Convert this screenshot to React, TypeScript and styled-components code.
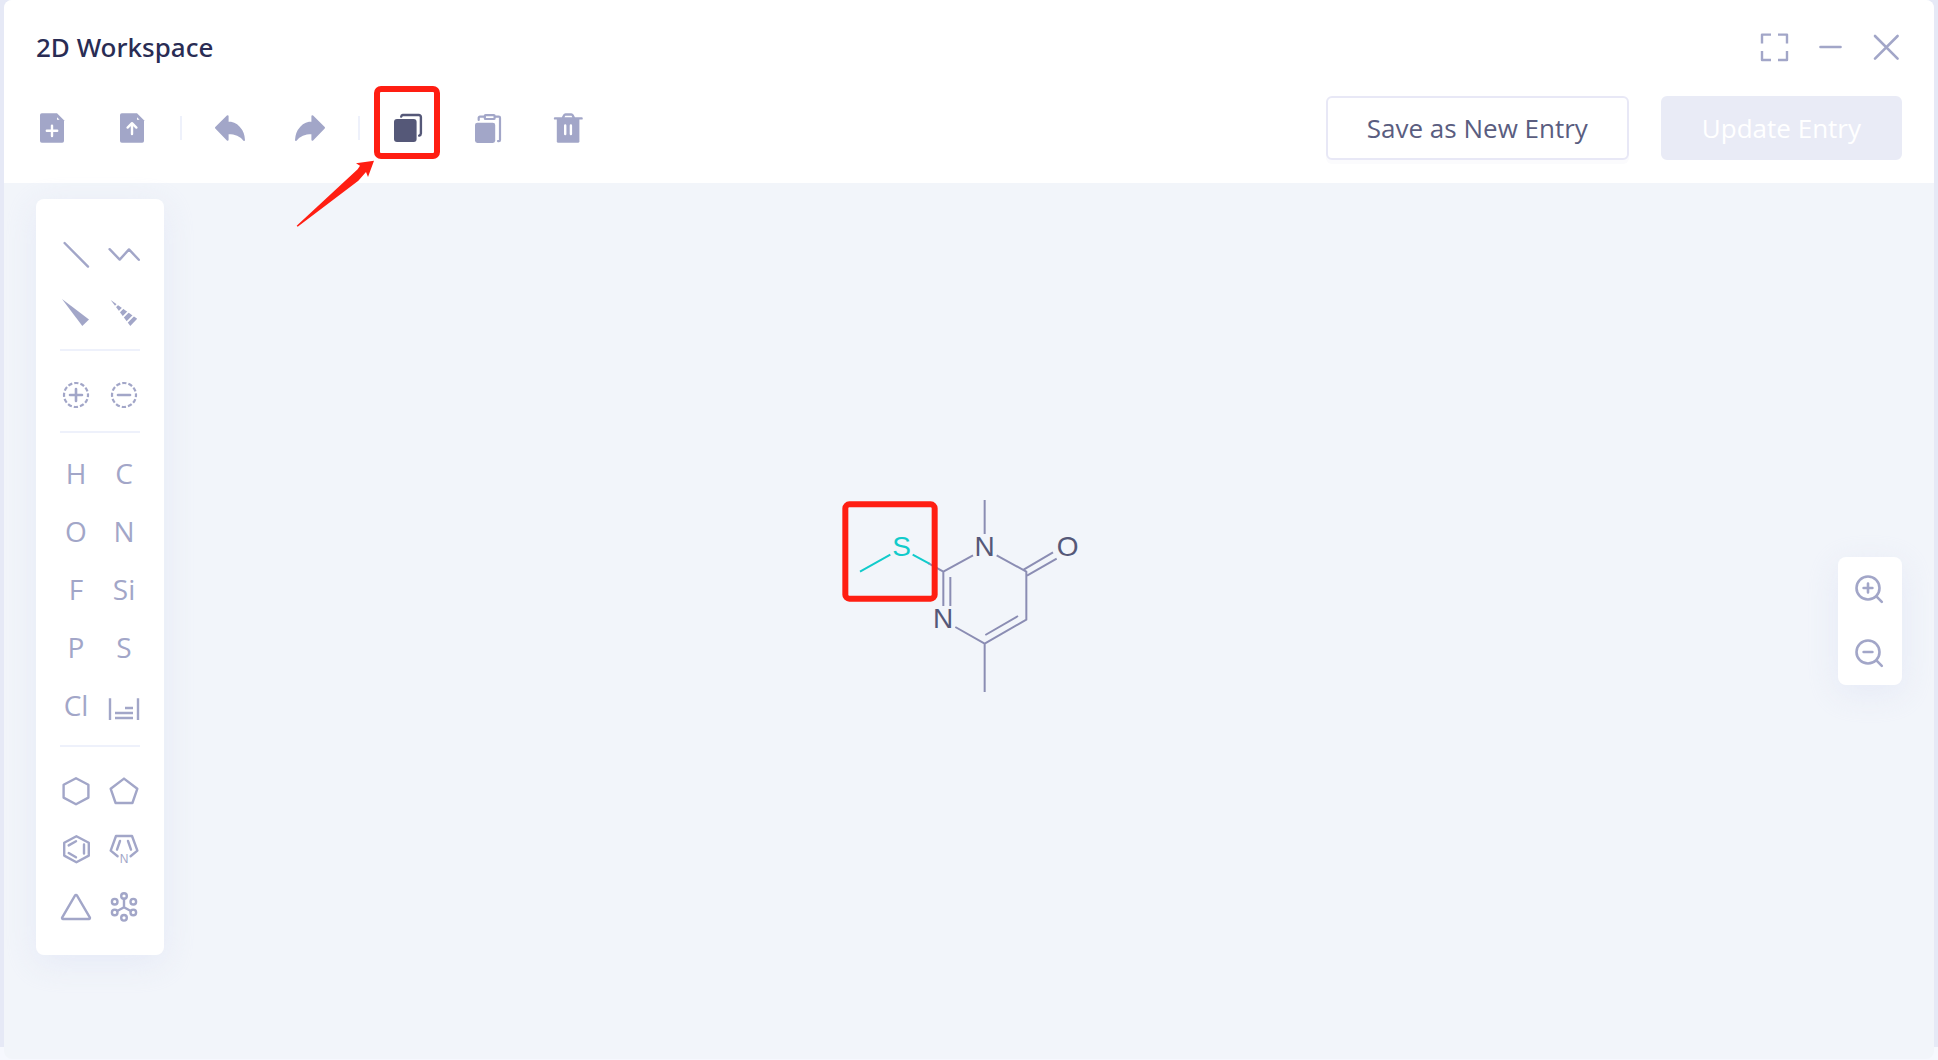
import React from "react";
import styled, { createGlobalStyle, css } from "styled-components";

const color = {
  icon: "#a2a6c8",
  dark: "#555878",
  title: "#292c54",
  canvas: "#f2f5fa",
  line: "#eef1fb",
  bond: "#8b8db3",
  teal: "#11cbcb",
  mark: "#ff1e12",
};

const GlobalStyle = createGlobalStyle`
  *, *::before, *::after { box-sizing: border-box; }
  body {
    margin: 0;
    font-family: "Open Sans", "Noto Sans", sans-serif;
    font-size: 26px;
    color: ${color.dark};
  }
`;

const Page = styled.div`
  display: flex;
  min-height: 100vh;
  padding: 0 4px 1px;
  background: linear-gradient(#e6e9f6 calc(100% - 13px), #f6f8fe 0);
`;

const Workspace = styled.main`
  display: flex;
  flex: 1;
  flex-direction: column;
  overflow: hidden;
  border-radius: 8px;
  background: ${color.canvas};
`;

const Header = styled.header`
  display: flex;
  flex-direction: column;
  gap: 32px;
  padding: 30px 32px 23px;
  background: #fff;
`;

const Bar = styled.div`
  display: flex;
  align-items: center;
  justify-content: space-between;
`;

const Title = styled.h1`
  margin: 0;
  font-family: "Noto Sans", "Open Sans", sans-serif;
  font-size: 26px;
  font-weight: 500;
  line-height: 34px;
  color: ${color.title};
`;

const Group = styled.div<{ $gap: number }>`
  display: flex;
  align-items: center;
  gap: ${(p) => p.$gap}px;
`;

const IconButton = styled.button<{ $active?: boolean }>`
  position: relative;
  display: flex;
  width: 32px;
  height: 32px;
  padding: 0;
  border: 0;
  background: none;
  color: ${(p) => (p.$active ? color.dark : color.icon)};
  cursor: pointer;
`;

const Separator = styled.span`
  width: 2px;
  height: 24px;
  margin: 0 -16px;
  background: ${color.line};
`;

const ActionButton = styled.button<{ $filled?: boolean }>`
  height: 64px;
  padding: 0 39px;
  border: 2px solid #e8e8f6;
  border-radius: 6px;
  background: #fff;
  box-shadow: 0 4px 0 #fbfbfd;
  font: inherit;
  color: #5a5d80;
  cursor: pointer;
  ${(p) =>
    p.$filled &&
    css`
      border-color: #e9ebf6;
      background: #e9ebf6;
      box-shadow: none;
      color: #fff;
    `}
`;

const Canvas = styled.section`
  position: relative;
  display: flex;
  flex: 1;
  align-items: flex-start;
  justify-content: space-between;
  padding: 16px 32px;
`;

const Panel = styled.div`
  border-radius: 8px;
  background: #fff;
  box-shadow: 0 8px 32px rgba(222, 226, 245, 0.6);
`;

const Palette = styled(Panel)`
  padding: 26px 24px 20px;
`;

const ToolGrid = styled.div`
  display: grid;
  grid-template-columns: 32px 32px;
  grid-auto-rows: 58px;
  column-gap: 16px;
`;

const Rule = styled.hr`
  height: 2px;
  margin: 8px 0 14px;
  border: 0;
  background: ${color.line};
`;

const ToolButton = styled.button`
  display: flex;
  align-items: center;
  justify-content: center;
  padding: 0;
  border: 0;
  background: none;
  color: ${color.icon};
  cursor: pointer;
`;

const ElementButton = styled(ToolButton)`
  padding-bottom: 6px;
  font: inherit;
  font-size: 28px;
`;

const ZoomPanel = styled(Panel)`
  display: flex;
  flex-direction: column;
  align-self: center;
`;

const ZoomButton = styled(ToolButton)`
  width: 64px;
  height: 64px;
`;

const Highlight = styled.span`
  position: absolute;
  top: -26px;
  left: -18px;
  width: 66px;
  height: 73px;
  border: 6px solid ${color.mark};
  border-radius: 7px;
  pointer-events: none;
`;

const Pointer = styled.svg`
  position: absolute;
  top: 48px;
  left: -96px;
  overflow: visible;
  pointer-events: none;
`;

const Molecule = styled.svg`
  position: absolute;
  top: 297px;
  left: calc(50% - 149px);
  font-family: "Liberation Sans", Arial, sans-serif;
`;

type IconProps = { children: React.ReactNode; w?: number };

const Icon = ({ children, w = 2.4 }: IconProps) => (
  <svg
    width="32"
    height="32"
    viewBox="0 0 32 32"
    fill="none"
    stroke="currentColor"
    strokeWidth={w}
    strokeLinecap="round"
    strokeLinejoin="round"
    overflow="visible"
    aria-hidden="true"
  >
    {children}
  </svg>
);

const Sheet = () => (
  <>
    <path
      d="M5.8 1.3H21L28 8.3V28.9a1.8 1.8 0 0 1-1.8 1.8H5.8A1.8 1.8 0 0 1 4 28.9V3.1a1.8 1.8 0 0 1 1.8-1.8z"
      fill="currentColor"
      stroke="none"
    />
    <path d="M21 5.2v2.6h2.6z" fill="#fff" stroke="none" />
  </>
);

const NewFile = () => (
  <Icon>
    <Sheet />
    <path d="M16 13.6v10.4M10.8 18.8h10.4" stroke="#fff" />
  </Icon>
);

const UploadFile = () => (
  <Icon>
    <Sheet />
    <path d="M16 22V11.4M11.6 15.6l4.4-4.4 4.4 4.4" stroke="#fff" />
  </Icon>
);

const arrowPath = "M2 15.8 13.6 4.2V10.6C22.5 10.6 29.5 17.5 30 28 26 22.5 21 20.8 13.6 21V27.8z";

const Undo = () => (
  <Icon w={2}>
    <path d={arrowPath} fill="currentColor" />
  </Icon>
);

const Redo = () => (
  <Icon w={2}>
    <path d={arrowPath} fill="currentColor" transform="matrix(-1 0 0 1 32 0)" />
  </Icon>
);

const Copy = () => (
  <Icon w={2.4}>
    <path d="M9.2 4.6A2 2 0 0 1 10.8 3H26.8A2.1 2.1 0 0 1 28.9 5.1V21.4A2.4 2.4 0 0 1 27.2 23.6" />
    <rect x="1.2" y="6.2" width="24.2" height="24.6" rx="3.6" fill="#fff" stroke="none" />
    <rect x="2" y="7" width="22.6" height="23" rx="3" fill="currentColor" stroke="none" />
  </Icon>
);

const Paste = () => (
  <Icon w={2.2}>
    <rect x="3" y="10.7" width="20.2" height="20.3" rx="2.4" fill="currentColor" stroke="none" />
    <path d="M6.7 8V5.8A1.2 1.2 0 0 1 7.9 4.6H12.6M23 4.6H26.8A1.2 1.2 0 0 1 28 5.8V27.9A1.2 1.2 0 0 1 26.8 29.1H26" />
    <rect x="12.8" y="3.2" width="9.8" height="3.8" rx="0.8" />
  </Icon>
);

const Trash = () => (
  <Icon>
    <path d="M3 6.4H29.6M10.8 6 12.2 3.3A1.5 1.5 0 0 1 13.5 2.5H19.3A1.5 1.5 0 0 1 20.6 3.3L22 6" />
    <path
      d="M4.8 7H27.4V29.2A1.5 1.5 0 0 1 25.9 30.7H6.3A1.5 1.5 0 0 1 4.8 29.2z"
      fill="currentColor"
      stroke="none"
    />
    <path d="M13.2 13.4V22M18.9 13.4V22" stroke="#fff" />
  </Icon>
);

const FullScreen = () => (
  <Icon>
    <path
      d="M4 12.6V3.6H13M20 3.6H29V12.6M29 20V29H20M13 29H4V20"
      strokeLinecap="butt"
    />
  </Icon>
);

const Minimize = () => (
  <Icon w={2.6}>
    <path d="M6.5 16H26.5" />
  </Icon>
);

const Close = () => (
  <Icon w={2.6}>
    <path d="M5 5 27.6 27.6M27.6 5 5 27.6" />
  </Icon>
);

const SingleBond = () => (
  <Icon>
    <path d="M4.6 5 28 28.6" />
  </Icon>
);

const Chain = () => (
  <Icon>
    <path d="M1.6 11.2 11.7 21.6 21 11.4 30.8 21.8" />
  </Icon>
);

const Wedge = () => (
  <Icon>
    <path d="M2 3 29 23.4 22.3 30z" fill="currentColor" stroke="none" />
  </Icon>
);

const HashedWedge = () => (
  <Icon w={12}>
    <clipPath id="hashed-wedge">
      <path d="M2.7 4 29.2 22.7 22.3 30z" />
    </clipPath>
    <path
      d="M2.7 4 26 27"
      strokeLinecap="butt"
      strokeDasharray="7 1.8 4.6 1.8 4.6 1.8 4.6 1.8 8"
      clipPath="url(#hashed-wedge)"
    />
  </Icon>
);

const Charge = ({ plus }: { plus?: boolean }) => (
  <Icon w={2.2}>
    <circle cx="16" cy="17" r="12" strokeLinecap="butt" strokeDasharray="4.3 1.98" strokeDashoffset="2.15" />
    <path d={plus ? "M16 11V23M10 17H22" : "M10 17H22"} strokeWidth="2.6" />
  </Icon>
);

const PeriodicTable = () => (
  <Icon>
    <path
      d="M2 6.3V28M30 6.3V28M17 16H25M7 21H25M7 26H25"
      strokeLinecap="butt"
    />
  </Icon>
);

const Hexagon = () => (
  <Icon>
    <path d="M16 4.2 28.4 10.8V23.6L16 30.2 3.6 23.6V10.8z" />
  </Icon>
);

const Pentagon = () => (
  <Icon>
    <path d="M16 4.6 29.3 14.8 24.4 29H7.6L2.7 14.8z" />
  </Icon>
);

const Benzene = () => (
  <Icon>
    <path d="M16.4 4.2 28.8 10.8V23.6L16.4 30.2 4.2 23.6V10.8z" />
    <path d="M24 12.4V21.6M8.7 13.4 16 9.2M8.7 21 16 25.3" />
  </Icon>
);

const Pyrrole = () => (
  <Icon>
    <path d="M9.6 24.2 2.7 18.6 8 4H24L29.4 18.6 22.6 24.2" />
    <path d="M12 9 9 17.6M20 9 23 17.6" />
    <text
      x="16.2"
      y="31"
      textAnchor="middle"
      fontSize="12"
      fontWeight="500"
      fill="currentColor"
      stroke="none"
    >
      N
    </text>
  </Icon>
);

const Triangle = () => (
  <Icon>
    <path d="M15.1 5.4a1 1 0 0 1 1.8 0L29.9 27.6a1 1 0 0 1-.9 1.4H3a1 1 0 0 1-.9-1.4z" />
  </Icon>
);

const Cluster = () => (
  <Icon>
    {[
      [16, 6],
      [6.7, 11.7],
      [25.3, 11.7],
      [6.7, 22.4],
      [25.3, 22.4],
      [16, 27.8],
    ].map(([x, y]) => (
      <circle key={`${x}-${y}`} cx={x} cy={y} r="2.8" />
    ))}
    <path d="M16 8.8V17.2L9.2 21M16 17.2 22.8 21" />
  </Icon>
);

const Magnifier = ({ plus }: { plus?: boolean }) => (
  <Icon w={2.6}>
    <circle cx="14" cy="15" r="11.5" />
    <path d="M22.4 23.4 27.8 28.8" />
    <path d={plus ? "M14 10.6V19.4M9.6 15H18.4" : "M9.6 15H18.4"} />
  </Icon>
);

type Tool = { label: string; icon: React.ReactNode };

const bondTools: Tool[] = [
  { label: "Single bond", icon: <SingleBond /> },
  { label: "Chain", icon: <Chain /> },
  { label: "Wedge bond", icon: <Wedge /> },
  { label: "Hashed bond", icon: <HashedWedge /> },
];

const chargeTools: Tool[] = [
  { label: "Increase charge", icon: <Charge plus /> },
  { label: "Decrease charge", icon: <Charge /> },
];

const elements = ["H", "C", "O", "N", "F", "Si", "P", "S", "Cl"];

const ringTools: Tool[] = [
  { label: "Cyclohexane", icon: <Hexagon /> },
  { label: "Cyclopentane", icon: <Pentagon /> },
  { label: "Benzene", icon: <Benzene /> },
  { label: "Pyrrole", icon: <Pyrrole /> },
  { label: "Cyclopropane", icon: <Triangle /> },
  { label: "Templates", icon: <Cluster /> },
];

const Tools = ({ items }: { items: Tool[] }) => (
  <ToolGrid>
    {items.map((t) => (
      <ToolButton key={t.label} type="button" aria-label={t.label}>
        {t.icon}
      </ToolButton>
    ))}
  </ToolGrid>
);

const Structure = () => (
  <Molecule width="280" height="230" viewBox="0 0 840 690" role="img" aria-label="Molecule structure">
    <g fill="none" stroke={color.bond} strokeWidth="6" strokeLinejoin="round">
      <path d="M494 60V162M459 226 370 275V378M391 291V378M326 250 370 275" />
      <path d="M530 226 619 275V419L494 491 406 441M494 491V636M594 408 496 465" />
      <path d="M611 269 699 217M621 287 710 236" />
    </g>
    <path d="M120 275 211 224M278 224 328 251" fill="none" stroke={color.teal} strokeWidth="6" />
    <g fontSize="84" textAnchor="middle" fill={color.dark}>
      <text x="245" y="228" fill={color.teal}>S</text>
      <text x="494" y="228">N</text>
      <text x="743" y="228">O</text>
      <text x="369" y="444">N</text>
    </g>
    <rect x="76" y="73" width="268" height="283" rx="12" fill="none" stroke={color.mark} strokeWidth="18" />
  </Molecule>
);

export default function App() {
  return (
    <>
      <GlobalStyle />
      <Page>
        <Workspace>
          <Header>
            <Bar>
              <Title>2D Workspace</Title>
              <Group $gap={24}>
                <IconButton type="button" aria-label="Full screen"><FullScreen /></IconButton>
                <IconButton type="button" aria-label="Minimize"><Minimize /></IconButton>
                <IconButton type="button" aria-label="Close"><Close /></IconButton>
              </Group>
            </Bar>
            <Bar>
              <Group $gap={48}>
                <IconButton type="button" aria-label="New file"><NewFile /></IconButton>
                <IconButton type="button" aria-label="Upload file"><UploadFile /></IconButton>
                <Separator />
                <IconButton type="button" aria-label="Undo"><Undo /></IconButton>
                <IconButton type="button" aria-label="Redo"><Redo /></IconButton>
                <Separator />
                <IconButton type="button" aria-label="Copy" $active>
                  <Copy />
                  <Highlight />
                  <Pointer width="78" height="67" viewBox="0 0 234 201" aria-hidden="true">
                    <path d="M234 2 180 10 192 17 185 28 2 197 5 200 187 62 210 36 216 51z" fill={color.mark} />
                  </Pointer>
                </IconButton>
                <IconButton type="button" aria-label="Paste"><Paste /></IconButton>
                <IconButton type="button" aria-label="Delete"><Trash /></IconButton>
              </Group>
              <Group $gap={32}>
                <ActionButton type="button">Save as New Entry</ActionButton>
                <ActionButton type="button" $filled disabled>Update Entry</ActionButton>
              </Group>
            </Bar>
          </Header>
          <Canvas>
            <Structure />
            <Palette>
              <Tools items={bondTools} />
              <Rule />
              <Tools items={chargeTools} />
              <Rule />
              <ToolGrid>
                {elements.map((name) => (
                  <ElementButton key={name} type="button">{name}</ElementButton>
                ))}
                <ToolButton type="button" aria-label="Periodic table"><PeriodicTable /></ToolButton>
              </ToolGrid>
              <Rule />
              <Tools items={ringTools} />
            </Palette>
            <ZoomPanel>
              <ZoomButton type="button" aria-label="Zoom in"><Magnifier plus /></ZoomButton>
              <ZoomButton type="button" aria-label="Zoom out"><Magnifier /></ZoomButton>
            </ZoomPanel>
          </Canvas>
        </Workspace>
      </Page>
    </>
  );
}
